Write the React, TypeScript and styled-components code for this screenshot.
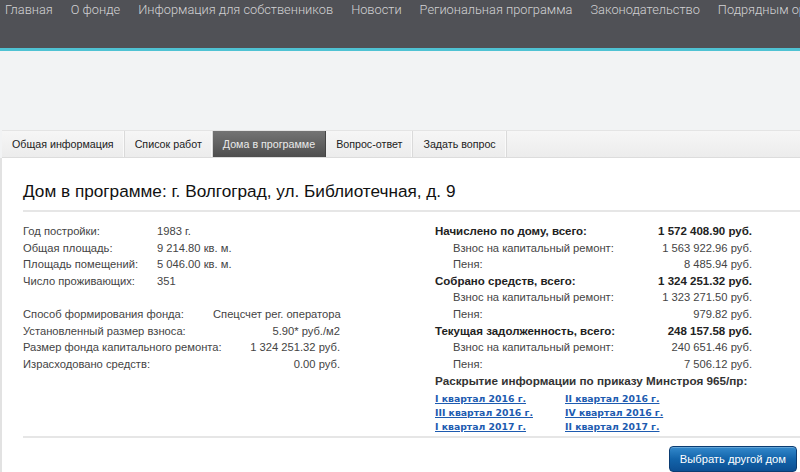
import React from 'react';
import styled, { createGlobalStyle } from 'styled-components';

const GlobalStyle = createGlobalStyle`
  body {
    margin: 0;
    background: #f2f3f4;
    font-family: "Liberation Sans", Arial, sans-serif;
  }
`;

const TopNav = styled.nav`
  height: 48px;
  background: #505156;
  border-bottom: 3px solid #4fc2d3;
  display: flex;
  align-items: flex-start;
  padding: 0 0 0 5px;
  gap: 18px;
  overflow: hidden;
  white-space: nowrap;
`;

const NavItem = styled.a`
  font-family: Roboto, "Liberation Sans", sans-serif;
  font-size: 12.8px;
  font-weight: 300;
  line-height: 20px;
  color: #d2d2d4;
  text-decoration: none;
  flex-shrink: 0;
`;

const Band = styled.div`
  height: 79px;
`;

const Tabs = styled.div`
  display: flex;
  height: 26px;
  margin-left: 2px;
  background: linear-gradient(#f6f6f6, #ececec);
  border-top: 1px solid #e4e4e4;
  border-bottom: 1px solid #dcdcdc;
`;

const Tab = styled.div<{ $active?: boolean }>`
  padding: 0 10px;
  font-size: 10.7px;
  line-height: 26px;
  color: ${p => (p.$active ? '#eaeaea' : '#222')};
  background: ${p => (p.$active ? 'linear-gradient(#747474, #4e4e4e)' : 'transparent')};
  border-right: 1px solid ${p => (p.$active ? '#444' : '#dadada')};
  box-shadow: ${p => (p.$active ? 'none' : 'inset -1px 0 0 #fafafa')};
  white-space: nowrap;
`;

const Content = styled.main`
  background: #fff;
  border-left: 2px solid #e2e2e2;
  padding: 0 0 2px 21px;
`;

const Title = styled.h1`
  margin: 0;
  padding: 22px 0 8px;
  font-size: 17.2px;
  line-height: 22px;
  font-weight: normal;
  color: #111;
`;

const Rule = styled.div`
  border-top: 2px solid #e6e6e6;
`;

const Columns = styled.div`
  display: flex;
  padding: 11px 0 3px;
`;

const LeftCol = styled.div`
  width: 412px;
  display: flex;
  flex-direction: column;
  gap: 16.6px;
`;

const RightCol = styled.div`
  width: 317px;
`;

const InfoGrid = styled.div<{ $cols: string }>`
  display: grid;
  grid-template-columns: ${p => p.$cols};
  line-height: 16.6px;
  color: #333;
`;

const Cell = styled.div<{ $right?: boolean; $bold?: boolean; $indent?: boolean }>`
  text-align: ${p => (p.$right ? 'right' : 'left')};
  font-weight: ${p => (p.$bold ? 'bold' : 'normal')};
  font-size: ${p => (p.$bold ? '11.5px' : '11.2px')};
  color: ${p => (p.$bold ? '#222' : '#444')};
  padding-left: ${p => (p.$indent ? '18px' : '0')};
  white-space: nowrap;
`;

const SectionHead = styled.div`
  font-weight: bold;
  font-size: 11.7px;
  line-height: 17px;
  color: #333;
  white-space: nowrap;
`;

const Links = styled.div`
  display: grid;
  grid-template-columns: 130px auto;
  padding-top: 3px;
`;

const DocLink = styled.a`
  font-family: "DejaVu Sans", Verdana, sans-serif;
  font-weight: bold;
  font-size: 9.3px;
  line-height: 13.6px;
  color: #1d5bb0;
  text-decoration: underline;
  white-space: nowrap;
  justify-self: start;
`;

const Footer = styled.div`
  display: flex;
  justify-content: flex-end;
  padding: 8px 3px 0 0;
`;

const Button = styled.button`
  height: 26px;
  padding: 0 10px;
  font-family: "Liberation Sans", Arial, sans-serif;
  font-size: 11.2px;
  color: #fff;
  border: 1px solid #0b3c72;
  border-radius: 4px;
  background: linear-gradient(#3389cc, #1364aa 50%, #0c4f93);
  box-shadow: inset 0 1px 0 rgba(255, 255, 255, 0.25);
`;

const nav = [
  'Главная',
  'О фонде',
  'Информация для собственников',
  'Новости',
  'Региональная программа',
  'Законодательство',
  'Подрядным организациям',
];

const tabs = ['Общая информация', 'Список работ', 'Дома в программе', 'Вопрос-ответ', 'Задать вопрос'];

const house = [
  ['Год постройки:', '1983 г.'],
  ['Общая площадь:', '9 214.80 кв. м.'],
  ['Площадь помещений:', '5 046.00 кв. м.'],
  ['Число проживающих:', '351'],
];

const fund = [
  ['Способ формирования фонда:', 'Спецсчет рег. оператора'],
  ['Установленный размер взноса:', '5.90* руб./м2'],
  ['Размер фонда капитального ремонта:', '1 324 251.32 руб.'],
  ['Израсходовано средств:', '0.00 руб.'],
];

const money: [string, string, boolean][] = [
  ['Начислено по дому, всего:', '1 572 408.90 руб.', true],
  ['Взнос на капитальный ремонт:', '1 563 922.96 руб.', false],
  ['Пеня:', '8 485.94 руб.', false],
  ['Собрано средств, всего:', '1 324 251.32 руб.', true],
  ['Взнос на капитальный ремонт:', '1 323 271.50 руб.', false],
  ['Пеня:', '979.82 руб.', false],
  ['Текущая задолженность, всего:', '248 157.58 руб.', true],
  ['Взнос на капитальный ремонт:', '240 651.46 руб.', false],
  ['Пеня:', '7 506.12 руб.', false],
];

const reports = [
  'I квартал 2016 г.',
  'II квартал 2016 г.',
  'III квартал 2016 г.',
  'IV квартал 2016 г.',
  'I квартал 2017 г.',
  'II квартал 2017 г.',
];

export default function App() {
  return (
    <>
      <GlobalStyle />
      <TopNav>
        {nav.map(n => (
          <NavItem key={n} href="#">{n}</NavItem>
        ))}
      </TopNav>
      <Band />
      <Tabs>
        {tabs.map(t => (
          <Tab key={t} $active={t === 'Дома в программе'}>{t}</Tab>
        ))}
      </Tabs>
      <Content>
        <Title>Дом в программе: г. Волгоград, ул. Библиотечная, д. 9</Title>
        <Rule />
        <Columns>
          <LeftCol>
            <InfoGrid $cols="134px auto">
              {house.map(([k, v]) => (
                <React.Fragment key={k}>
                  <Cell>{k}</Cell>
                  <Cell>{v}</Cell>
                </React.Fragment>
              ))}
            </InfoGrid>
            <InfoGrid $cols="190px 127px">
              {fund.map(([k, v]) => (
                <React.Fragment key={k}>
                  <Cell>{k}</Cell>
                  <Cell $right>{v}</Cell>
                </React.Fragment>
              ))}
            </InfoGrid>
          </LeftCol>
          <RightCol>
            <InfoGrid $cols="1fr auto">
              {money.map(([k, v, total], i) => (
                <React.Fragment key={i}>
                  <Cell $bold={total} $indent={!total}>{k}</Cell>
                  <Cell $bold={total} $right>{v}</Cell>
                </React.Fragment>
              ))}
            </InfoGrid>
            <SectionHead>Раскрытие информации по приказу Минстроя 965/пр:</SectionHead>
            <Links>
              {reports.map(r => (
                <DocLink key={r} href="#">{r}</DocLink>
              ))}
            </Links>
          </RightCol>
        </Columns>
        <Rule />
        <Footer>
          <Button>Выбрать другой дом</Button>
        </Footer>
      </Content>
    </>
  );
}
